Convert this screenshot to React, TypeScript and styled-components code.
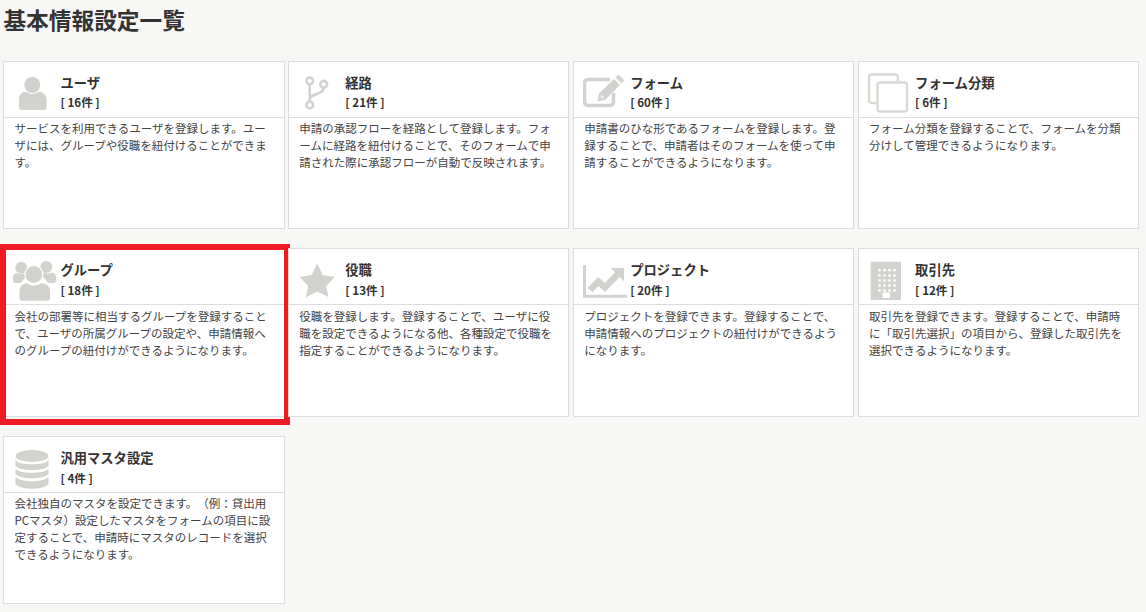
import React from "react";
import styled, { createGlobalStyle } from "styled-components";

const Global = createGlobalStyle`
  html, body { margin: 0; padding: 0; background: #f7f7f5; }
  body { font-family: "Noto Sans CJK JP", "Noto Sans", sans-serif; color: #333; overflow: hidden; }
`;

const Page = styled.main`
  width: 1146px;
  height: 612px;
  padding: 3px 0 0 3.45px;
  box-sizing: border-box;
`;

const Title = styled.h1`
  margin: 0 0 23.65px 0;
  font-size: 22.7px;
  line-height: 34px;
  font-weight: 700;
  color: #333;
`;

const Grid = styled.div`
  display: grid;
  grid-template-columns: repeat(4, 281.1px);
  grid-auto-rows: 168.3px;
  column-gap: 3.8px;
  row-gap: 19.4px;
`;

const Card = styled.section`
  position: relative;
  background: #fff;
  border: 1px solid #ddd;
  box-sizing: border-box;
`;

const Highlight = styled.div`
  position: absolute;
  top: -5.35px;
  left: -4.45px;
  width: 290px;
  height: 181px;
  border: 6px solid #ed1c24;
  box-sizing: border-box;
  pointer-events: none;
`;

const Header = styled.header`
  display: flex;
  height: 56px;
  box-sizing: border-box;
  border-bottom: 1px solid #ddd;
  padding: 5px 0 0 9px;
`;

const Icon = styled.svg`
  flex: none;
  width: 48px;
  height: 48px;
  color: #d2d3ce;
`;

const Heading = styled.div`
  margin-left: -1px;
  padding-top: 6px;
  display: flex;
  flex-direction: column;
`;

const Name = styled.h2`
  margin: 0;
  font-size: 13.3px;
  line-height: 20px;
  font-weight: 700;
  color: #333;
`;

const Count = styled.div`
  margin: -0.35px 0 0;
  font-size: 11.6px;
  line-height: 20px;
  font-weight: 700;
  color: #333;
`;

const Description = styled.p`
  margin: 0;
  padding: 2.35px 9px 0 10px;
  font-size: 11.5px;
  line-height: 17px;
  color: #444;
  text-spacing-trim: space-all;
`;

const UserIcon = () => (
  <Icon viewBox="0 0 48 48" fill="currentColor">
    <circle cx="19.3" cy="18" r="8" />
    <path d="M6 32a7 7 0 0 1 7-7.3c2 1.6 4 2.3 6.3 2.3s4.300-.7 6.300-2.300a8 8 0 0 1 8 7.300V40a3 3 0 0 1-3 3H9a3 3 0 0 1-3-3z" />
  </Icon>
);

const RouteIcon = () => (
  <Icon viewBox="0 0 48 48" fill="none" stroke="currentColor" strokeWidth="2.6">
    <circle cx="11.7" cy="14" r="3.4" />
    <circle cx="25.700" cy="17.300" r="3.400" />
    <circle cx="11.700" cy="38" r="3.400" />
    <path d="M11.700 17.500V34.500M25.700 20.700C25.700 28 11.700 26 11.700 33" />
  </Icon>
);

const FormIcon = () => (
  <Icon viewBox="0 0 48 48" fill="none">
    <path d="M27 12.500H5a3.500 3.500 0 0 0-3.500 3.500V35A3.500 3.500 0 0 0 5 38.500h22a3.500 3.500 0 0 0 3.500-3.500V26" stroke="currentColor" strokeWidth="3.500" />
    <path d="M14.500 34.500 16 26.500 31 12l6 6-15 15z" fill="currentColor" />
    <path d="M32.500 10.500 34.500 8.500a1.500 1.500 0 0 1 2 0l4 4a1.500 1.500 0 0 1 0 2l-2 2z" fill="currentColor" />
    <path d="M17.800 28.500l2.700 2.700" stroke="#fff" strokeWidth="1.500" />
  </Icon>
);

const CategoryIcon = () => (
  <Icon viewBox="0 0 48 48" fill="none" stroke="#d9d9d4" strokeWidth="2.400">
    <path d="M29.800 14V10a2.500 2.500 0 0 0-2.500-2.500H3.500A2.500 2.500 0 0 0 1 10v23.500A2.500 2.500 0 0 0 3.500 36H8" />
    <rect x="9.500" y="15.500" width="29.500" height="29" rx="2.500" />
  </Icon>
);

const GroupIcon = () => (
  <Icon viewBox="0 0 48 48" fill="currentColor">
    <circle cx="8.300" cy="13.700" r="6" />
    <circle cx="33.300" cy="13" r="6" />
    <path d="M0 24a5 5 0 0 1 4-5c2.500 1.500 6 1.500 8.500 0 1 .2 2 .7 3 1.500L11 25l-3 4H2.500A2.500 2.500 0 0 1 0 26.500z" />
    <path d="M43 24a5 5 0 0 0-4-5.500c-2.500 1.500-6 1.500-8.500 0-1 .2-2 .7-3 1.500l4.500 5 3 4h5.500a2.500 2.500 0 0 0 2.500-2.500z" />
    <circle cx="20.800" cy="20.500" r="9" stroke="#fff" strokeWidth="1.200" />
    <path d="M6.500 37a7.500 7.500 0 0 1 7.500-7.700c2 1.500 4.500 2.200 6.800 2.200s5-.7 7-2.200A7.800 7.800 0 0 1 37 37v6.700a3 3 0 0 1-3 3H9.500a3 3 0 0 1-3-3z" />
  </Icon>
);

const StarIcon = () => (
  <Icon viewBox="0 0 48 48" fill="currentColor">
    <path d="M19.200 9.300 24.700 21l12 2-8.500 9L30.700 43.300 19.200 37.500 7.700 43.300 10.200 32 1.700 23l12-2z" />
  </Icon>
);

const ChartIcon = () => (
  <Icon viewBox="0 0 48 48" fill="none" stroke="currentColor">
    <path d="M1.500 11V42.300H44" strokeWidth="3" />
    <path d="M7 36 15.300 27.500 22 33.500 35 20" strokeWidth="6.500" />
    <path d="M27.700 14H41V27.300z" fill="currentColor" stroke="none" />
  </Icon>
);

const windowCols = [10.3, 15.3, 20.3, 25.3];
const windowRows = [15, 20.3, 25.3, 30.3, 35.3];

const BuildingIcon = () => (
  <Icon viewBox="0 0 48 48">
    <rect x="2.700" y="7.700" width="30.300" height="38.300" rx="1" fill="currentColor" />
    {windowRows.map((y) =>
      windowCols.map((x) => <rect key={`${x}-${y}`} x={x} y={y} width="2.400" height="2.400" fill="#fff" />)
    )}
    <rect x="14.500" y="38.500" width="7.500" height="5.500" fill="#fff" />
  </Icon>
);

const DatabaseIcon = () => (
  <Icon viewBox="0 0 48 48" fill="currentColor">
    <ellipse cx="19" cy="14" rx="16.500" ry="6" />
    <path d="M2.500 18c2 3 9 4.300 16.500 4.300S33.500 21 35.500 18v5c0 3-7.300 5-16.500 5S2.500 26 2.500 23z" />
    <path d="M2.500 26.500c2 3 9 4.300 16.500 4.300s14.500-1.300 16.500-4.300V31c0 3-7.300 5.300-16.500 5.300S2.500 34 2.500 31z" />
    <path d="M2.500 34.500c2 3 9 4.800 16.500 4.800s14.500-1.800 16.500-4.800V41c0 3.300-7.300 5.700-16.500 5.700S2.500 44.300 2.500 41z" />
  </Icon>
);

const items = [
  { name: "ユーザ", count: 16, icon: <UserIcon />, text: "サービスを利用できるユーザを登録します。ユーザには、グループや役職を紐付けることができます。" },
  { name: "経路", count: 21, icon: <RouteIcon />, text: "申請の承認フローを経路として登録します。フォームに経路を紐付けることで、そのフォームで申請された際に承認フローが自動で反映されます。" },
  { name: "フォーム", count: 60, icon: <FormIcon />, text: "申請書のひな形であるフォームを登録します。登録することで、申請者はそのフォームを使って申請することができるようになります。" },
  { name: "フォーム分類", count: 6, icon: <CategoryIcon />, text: "フォーム分類を登録することで、フォームを分類分けして管理できるようになります。" },
  { name: "グループ", count: 18, icon: <GroupIcon />, highlighted: true, text: "会社の部署等に相当するグループを登録することで、ユーザの所属グループの設定や、申請情報へのグループの紐付けができるようになります。" },
  { name: "役職", count: 13, icon: <StarIcon />, text: "役職を登録します。登録することで、ユーザに役職を設定できるようになる他、各種設定で役職を指定することができるようになります。" },
  { name: "プロジェクト", count: 20, icon: <ChartIcon />, text: "プロジェクトを登録できます。登録することで、申請情報へのプロジェクトの紐付けができるようになります。" },
  { name: "取引先", count: 12, icon: <BuildingIcon />, text: "取引先を登録できます。登録することで、申請時に「取引先選択」の項目から、登録した取引先を選択できるようになります。" },
  { name: "汎用マスタ設定", count: 4, icon: <DatabaseIcon />, text: "会社独自のマスタを設定できます。（例：貸出用PCマスタ）設定したマスタをフォームの項目に設定することで、申請時にマスタのレコードを選択できるようになります。" },
];

export default function App() {
  return (
    <Page>
      <Global />
      <Title>基本情報設定一覧</Title>
      <Grid>
        {items.map((item) => (
          <Card key={item.name}>
            <Header>
              {item.icon}
              <Heading>
                <Name>{item.name}</Name>
                <Count>[ {item.count}件 ]</Count>
              </Heading>
            </Header>
            <Description>{item.text}</Description>
            {item.highlighted && <Highlight />}
          </Card>
        ))}
      </Grid>
    </Page>
  );
}
